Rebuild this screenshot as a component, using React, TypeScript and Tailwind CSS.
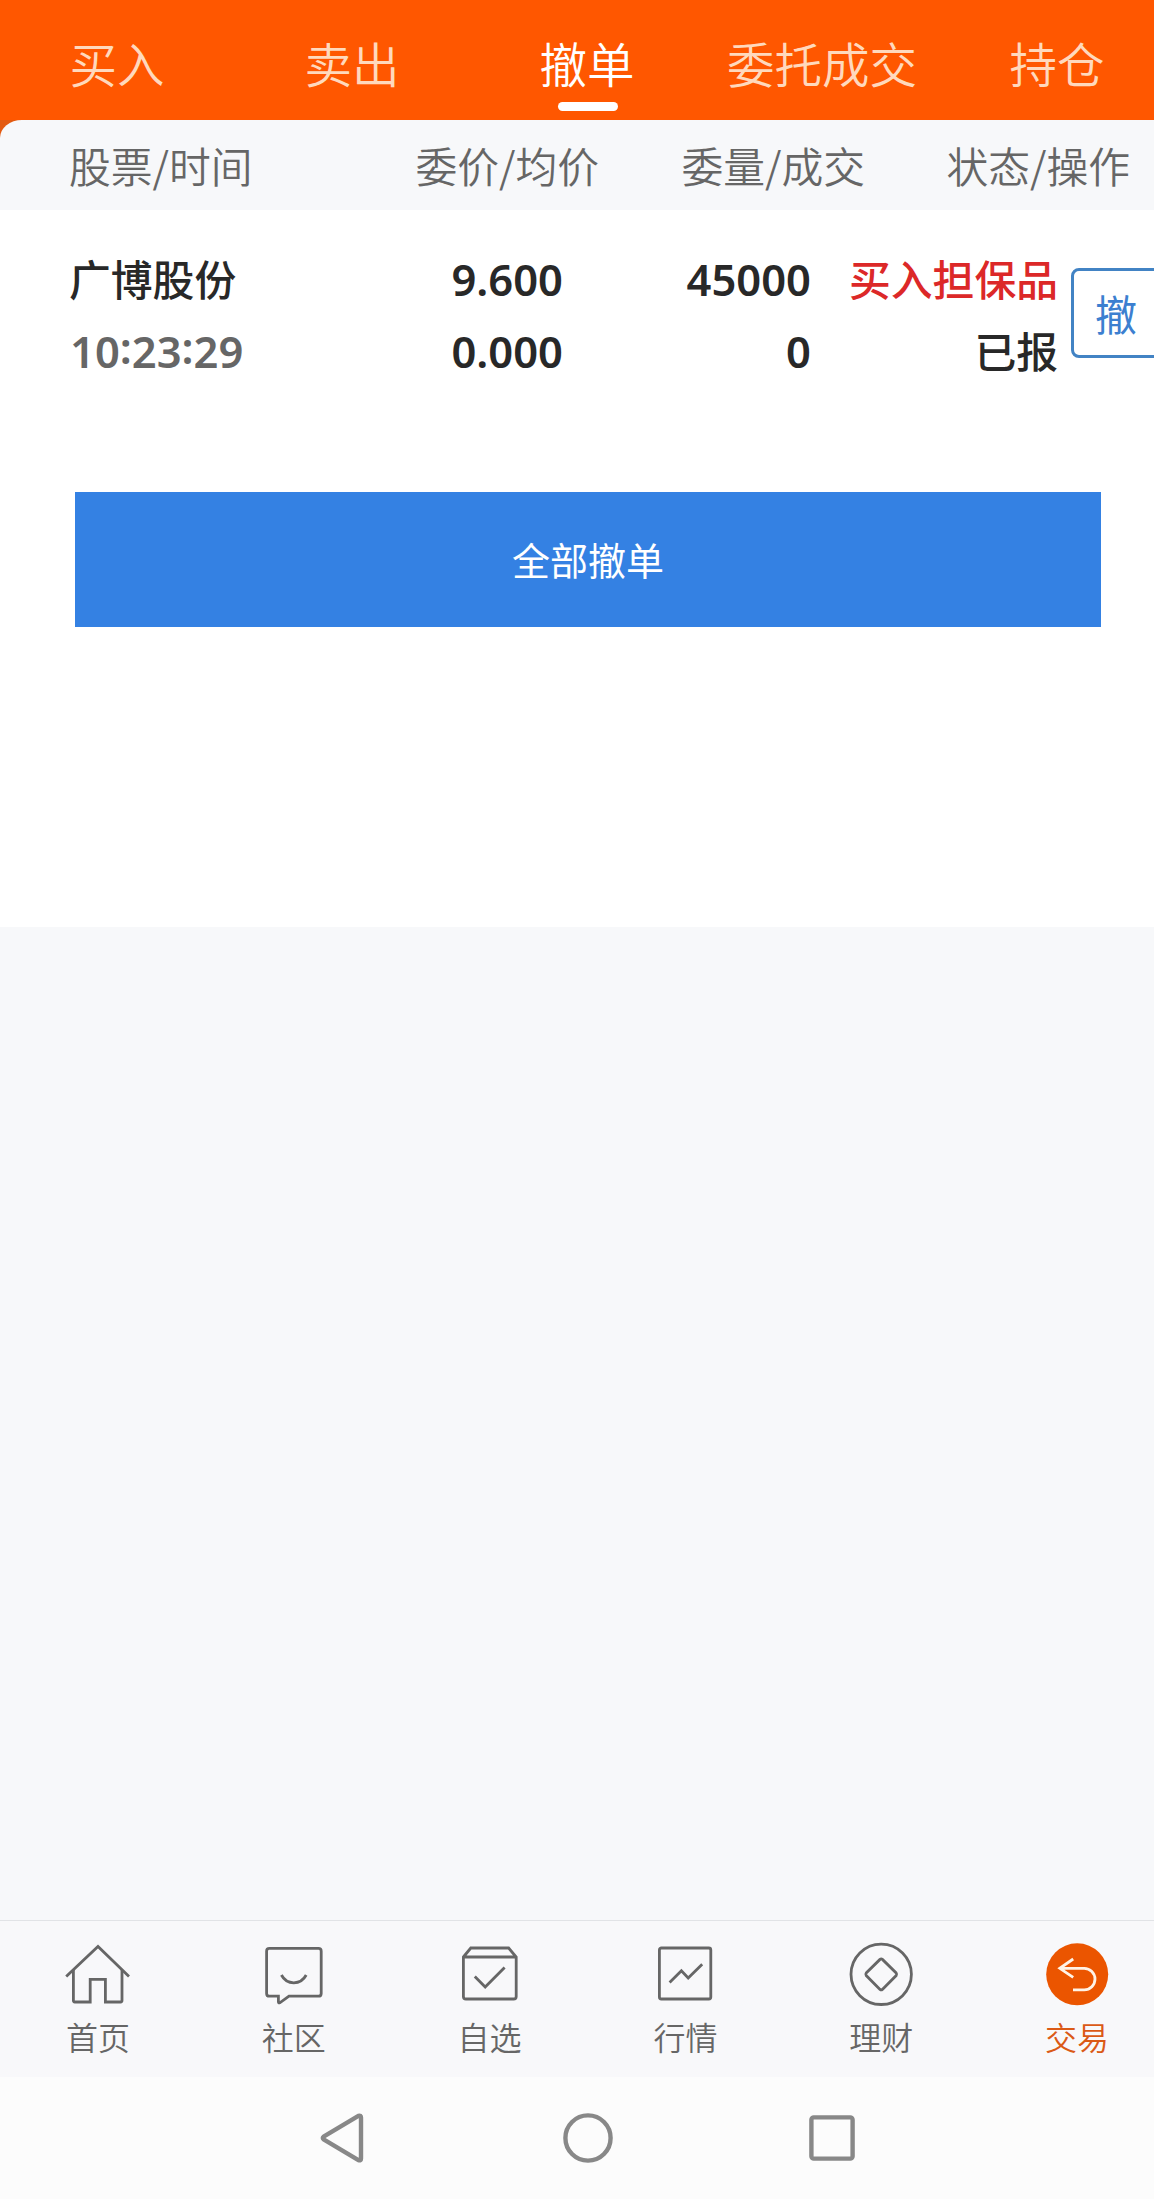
import { ReactNode } from "react";
import clsx from "clsx";

const tabs = ["买入", "卖出", "撤单", "委托成交", "持仓"]

const navItems: { label: string, icon: ReactNode }[] = [
   {
      label: "首页",
      icon: (
         <>
            <path d="M0.2 34.4 32 4.4 63 34.4" />
            <path d="M7.4 28V58.6q0 1.4 1.4 1.4H24.2V37.4H39.4V60H54.6q1.4 0 1.4-1.4V28" />
         </>
      ),
   },
   {
      label: "社区",
      icon: (
         <>
            <path d="M7.4 6.4H56.4q2.8 0 2.8 2.8V51.4q0 2.8-2.8 2.8H27L17.8 60.8q-1.4.6-1.4-1V54.2H7.4q-2.8 0-2.8-2.8V9.2q0-2.8 2.8-2.8Z" />
            <path d="M19.4 33q4.2 7.8 12.4 7.8T44.2 33" />
         </>
      ),
   },
   {
      label: "自选",
      icon: (
         <>
            <path d="M5.4 15 12.8 6H50.6L58.2 15V54.4q0 2.6-2.6 2.6H8q-2.6 0-2.6-2.6ZM5.4 15H58.2" />
            <path d="M16.8 34.4 27.2 45 46.6 25.4" />
         </>
      ),
   },
   {
      label: "行情",
      icon: (
         <>
            <rect x="6.4" y="6" width="51.4" height="51" rx="2" />
            <path d="M16.6 40.4 28.4 28.8 35.2 36 49.2 22.2" />
         </>
      ),
   },
   {
      label: "理财",
      icon: (
         <>
            <circle cx="32.2" cy="32.3" r="30.2" />
            <path d="M31 17.4q1.2-1 2.4 0L47.2 31q1 1.3 0 2.6L33.4 47.4q-1.2 1-2.4 0L17.2 33.6q-1-1.3 0-2.6Z" />
         </>
      ),
   },
   {
      label: "交易",
      icon: (
         <>
            <circle cx="32.2" cy="32.3" r="31" fill="#eb5500" stroke="none" />
            <path stroke="#fff3e6" d="M28.2 17 14.8 26.3 28.2 35.4M14.8 26.3H39.2a10.8 10.8 0 0 1 0 21.6H28" />
         </>
      ),
   },
]

function Colon() {
   return <span className="relative -top-1">:</span>
}

function TabBar() {
   return (
      <div className="flex h-[120px] bg-[#ff5700]">
         {tabs.map((tab) => (
            <div key={tab} className="flex w-[235px] flex-col items-center pt-[31px]">
               <span className={clsx("pr-px text-[47.5px] leading-[64px] font-[350]", tab === "撤单" ? "text-white" : "text-[#ffd9bd]")}>{tab}</span>
               {tab === "撤单" && <span className="mt-[7px] h-[9px] w-[60px] rounded-full bg-white" />}
            </div>
         ))}
      </div>
   )
}

function TableHead() {
   return (
      <div className="bg-[#e35a10]">
         <div className="flex h-[90px] rounded-tl-[22px_18px] bg-[#f7f8fa] pt-[15px] pl-[69px] text-[41.8px] leading-[60px] font-[350] whitespace-nowrap text-[#666]">
            <span className="w-[183px]">股票/时间</span>
            <span className="w-[347px] text-right">委价/均价</span>
            <span className="w-[266px] text-right">委量/成交</span>
            <span className="w-[265px] text-right">状态/操作</span>
         </div>
      </div>
   )
}

function OrderRow() {
   return (
      <div className="flex h-[282px] pt-8 pl-[69px] text-[41.8px] leading-[72px] font-medium text-[#282828]">
         <div className="w-[183px]">
            <p>广博股份</p>
            <p className="pt-px pl-px font-['Noto_Sans'] text-[43.5px] font-semibold text-[#666]">10<Colon />23<Colon />29</p>
         </div>
         <div className="w-[311px] pt-px text-right font-['Noto_Sans'] text-[43.5px] font-semibold">
            <p>9.600</p>
            <p>0.000</p>
         </div>
         <div className="w-[248px] pt-px text-right font-['Noto_Sans'] text-[43.5px] font-semibold">
            <p>45000</p>
            <p>0</p>
         </div>
         <div className="w-[247px] text-right">
            <p className="text-[#dc2828]">买入担保品</p>
            <p>已报</p>
         </div>
         <button className="mt-[26px] ml-[13px] h-[90px] w-[90px] rounded-lg border-3 border-[#4283c4] text-[42px] leading-[80px] font-normal text-[#3c7fd0]">撤</button>
      </div>
   )
}

function BottomNav() {
   return (
      <div className="flex h-[157px] border-t border-[#e1e3e6] bg-[#f8f8fa] pt-[21px]">
         {navItems.map((item) => (
            <div key={item.label} className={clsx("flex flex-1 flex-col items-center", item.label === "交易" ? "text-[#db5a16]" : "text-[#666]")}>
               <svg className="size-16 overflow-visible" viewBox="0 0 64 64" fill="none" stroke={item.label === "交易" ? "#fff" : "#666"} strokeWidth="2.8">
                  {item.icon}
               </svg>
               <span className="mt-1.5 text-[32px] leading-[48px] font-[350]">{item.label}</span>
            </div>
         ))}
      </div>
   )
}

function SystemBar() {
   return (
      <div className="flex h-[122px] items-center justify-center gap-[194px] bg-[#fcfcfc]">
         <svg className="size-[50px]" viewBox="0 0 50 50" fill="none" stroke="#888" strokeWidth="4.4" strokeLinejoin="round">
            <path d="M39.4 2.8Q42 2 42 4.6V45.4Q42 48 39.4 47.2L4.6 26.4Q3 25 4.6 23.6Z" />
         </svg>
         <svg className="size-[50px]" viewBox="0 0 50 50" fill="none" stroke="#888" strokeWidth="4.4">
            <circle cx="25" cy="25" r="22.6" />
         </svg>
         <svg className="size-[50px]" viewBox="0 0 50 50" fill="none" stroke="#888" strokeWidth="4.4">
            <rect x="4.4" y="4.4" width="41.2" height="41.2" rx="2.4" />
         </svg>
      </div>
   )
}

function App() {
   return (
      <div className="h-[2199px] w-[1154px] overflow-hidden bg-[#f7f8fa] font-['Noto_Sans_CJK_SC',sans-serif]">
         {/* content is a bit wider than the visible screen */}
         <div className="flex h-full w-[1175px] flex-col">
            <TabBar />
            <TableHead />
            <div className="h-[717px] bg-white">
               <OrderRow />
               <button className="mx-[75px] block h-[135px] w-[1026px] bg-[#3481e3] pb-0.5 text-[38px] text-white">全部撤单</button>
            </div>
            <div className="flex-1" />
            <BottomNav />
            <SystemBar />
         </div>
      </div>
   )
}

export default App;
